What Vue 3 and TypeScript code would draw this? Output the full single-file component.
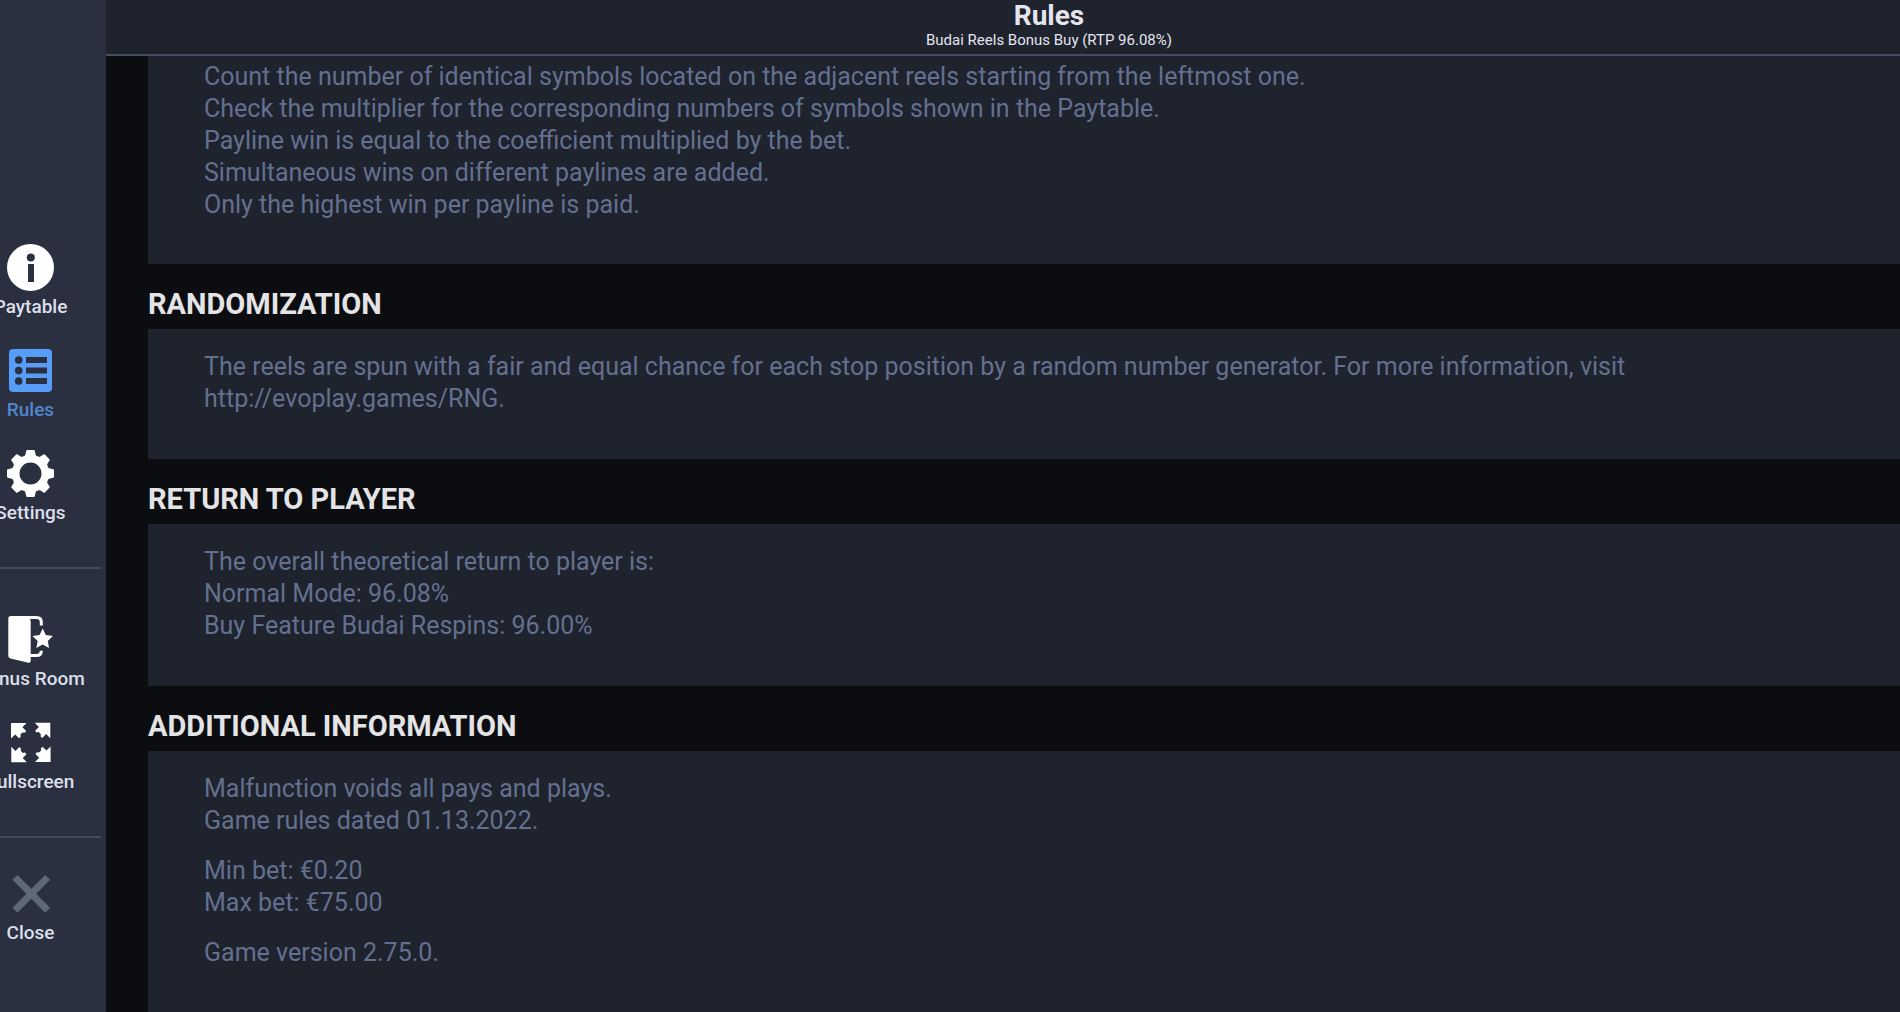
<script setup lang="ts">
interface RuleSection {
  title?: string
  paragraphs: string[][]
}

const sections: RuleSection[] = [
  {
    paragraphs: [
      [
        'Count the number of identical symbols located on the adjacent reels starting from the leftmost one.',
        'Check the multiplier for the corresponding numbers of symbols shown in the Paytable.',
        'Payline win is equal to the coefficient multiplied by the bet.',
        'Simultaneous wins on different paylines are added.',
        'Only the highest win per payline is paid.',
      ],
    ],
  },
  {
    title: 'RANDOMIZATION',
    paragraphs: [
      [
        'The reels are spun with a fair and equal chance for each stop position by a random number generator. For more information, visit http://evoplay.games/RNG.',
      ],
    ],
  },
  {
    title: 'RETURN TO PLAYER',
    paragraphs: [
      [
        'The overall theoretical return to player is:',
        'Normal Mode: 96.08%',
        'Buy Feature Budai Respins: 96.00%',
      ],
    ],
  },
  {
    title: 'ADDITIONAL INFORMATION',
    paragraphs: [
      ['Malfunction voids all pays and plays.', 'Game rules dated 01.13.2022.'],
      ['Min bet: €0.20', 'Max bet: €75.00'],
      ['Game version 2.75.0.'],
    ],
  },
]

const quarterTurns = [0, 90, 180, 270]
const gearTeeth = [0, 45, 90, 135, 180, 225, 270, 315]
</script>

<template>
  <div class="app">
    <div class="stage">
      <nav class="sidebar">
        <div class="group">
          <button type="button" class="item">
            <svg class="icon" viewBox="0 0 47 47" aria-hidden="true">
              <circle cx="23.5" cy="23.5" r="23.5" fill="currentColor" />
              <circle cx="23.8" cy="13.4" r="4" class="cut" />
              <rect x="21" y="20" width="6" height="18" class="cut" />
            </svg>
            <span class="label">Paytable</span>
          </button>
          <button type="button" class="item active" aria-current="page">
            <svg class="icon" viewBox="0 0 47 47" aria-hidden="true">
              <rect x="2" y="2" width="43" height="43" rx="4" fill="currentColor" />
              <g class="cut">
                <circle cx="11.7" cy="13" r="3.8" />
                <circle cx="11.7" cy="23.5" r="3.8" />
                <circle cx="11.7" cy="34" r="3.8" />
                <rect x="19" y="10" width="21" height="6" />
                <rect x="19" y="20.5" width="21" height="6" />
                <rect x="19" y="31" width="21" height="6" />
              </g>
            </svg>
            <span class="label">Rules</span>
          </button>
          <button type="button" class="item">
            <svg class="icon" viewBox="0 0 47 47" aria-hidden="true">
              <circle cx="23.5" cy="23.5" r="14.8" fill="none" stroke="currentColor" stroke-width="7.6" />
              <path
                v-for="angle in gearTeeth"
                :key="angle"
                d="M16.6 7.2 18.3 4.9 19.2 0.9Q19.4 0 20.3 0H26.7Q27.6 0 27.8 0.9L28.7 4.9 30.4 7.2Z"
                fill="currentColor"
                :transform="`rotate(${angle} 23.5 23.5)`"
              />
            </svg>
            <span class="label">Settings</span>
          </button>
        </div>
        <hr class="divider" />
        <div class="group lower">
          <button type="button" class="item">
            <svg class="icon" viewBox="0 0 47 47" aria-hidden="true">
              <path
                d="M4 0H19.5Q23.7 1.5 23.7 6V45Q23.7 47.2 21.4 46.7L3.5 42.6Q1.3 42 1.3 39.8V2.7Q1.3 0 4 0Z"
                fill="currentColor"
              />
              <path
                d="M18 1.5H29.5Q34.3 1.5 34.3 6.3V9.5M22 39.5H29.5Q34.3 39.5 34.3 34.7"
                fill="none"
                stroke="currentColor"
                stroke-width="3"
              />
              <path
                d="M35.7 12.6 38.8 18.9 45.9 19.9 40.8 24.9 42 31.9 35.7 28.6 29.4 31.9 30.6 24.9 25.5 19.9 32.6 18.9Z"
                fill="currentColor"
              />
            </svg>
            <span class="label">Bonus Room</span>
          </button>
          <button type="button" class="item">
            <svg class="icon" viewBox="0 0 47 47" aria-hidden="true">
              <path
                v-for="angle in quarterTurns"
                :key="angle"
                d="M4 4H19.6L15.4 8.2 19.2 12 17.6 13.8 15.6 13.4 13.4 15.6 13.8 17.6 12 19.2 8.2 15.4 4 19.6Z"
                fill="currentColor"
                :transform="`rotate(${angle} 23.8 23.5)`"
              />
            </svg>
            <span class="label">Fullscreen</span>
          </button>
        </div>
        <hr class="divider" />
        <div class="group closing">
          <button type="button" class="item">
            <svg class="icon muted" viewBox="0 0 47 47" aria-hidden="true">
              <path d="M8 7.4 40.6 40.2M40.6 7.4 8 40.2" fill="none" stroke="currentColor" stroke-width="7" />
            </svg>
            <span class="label">Close</span>
          </button>
        </div>
      </nav>

      <main class="main">
        <header class="header">
          <h1>Rules</h1>
          <p>Budai Reels Bonus Buy (RTP 96.08%)</p>
        </header>
        <section v-for="(section, i) in sections" :key="i" class="section">
          <h2 v-if="section.title">{{ section.title }}</h2>
          <div class="card">
            <p v-for="(lines, j) in section.paragraphs" :key="j">
              <span v-for="line in lines" :key="line" class="line">{{ line }}</span>
            </p>
          </div>
        </section>
      </main>
    </div>
    <div class="scrollbar"><div class="thumb"></div></div>
  </div>
</template>

<style>
body {
  margin: 0;
  background: #0b0d11;
}
</style>

<style scoped>
.app {
  display: flex;
  flex-direction: column;
  min-height: 100vh;
  overflow: hidden;
  font-family: Roboto, "Liberation Sans", sans-serif;
  background: #0b0d11;
}

/* The stage is wider than the window and bleeds off both sides. */
.stage {
  display: flex;
  flex: 1;
  margin: 0 -92px 0 -45px;
}

.sidebar {
  box-sizing: border-box;
  flex: none;
  width: 151px;
  padding-top: 244px;
  background: #2a3040;
}

.group {
  display: flex;
  flex-direction: column;
  align-items: center;
  gap: 28px;
}

.group.lower {
  padding-top: 47px;
}

.group.closing {
  padding-top: 32px;
}

.item {
  display: flex;
  flex-direction: column;
  align-items: center;
  gap: 4px;
  padding: 0;
  border: 0;
  background: none;
  color: #ffffff;
  font: inherit;
  cursor: pointer;
}

.icon {
  display: block;
  width: 47px;
  height: 47px;
}

.icon.muted {
  color: #5d6a76;
}

.cut {
  fill: #2a3040;
}

.label {
  color: #dcdfea;
  font-size: 19px;
  font-weight: 500;
  line-height: 24px;
  white-space: nowrap;
}

.active {
  color: #579df8;
}

.active .label {
  color: #4f86cc;
}

.divider {
  height: 2px;
  margin: 42px 5px 0;
  border: 0;
  background: #444c5c;
}

.main {
  display: flex;
  flex: 1;
  flex-direction: column;
  min-width: 0;
}

.header {
  box-sizing: border-box;
  height: 56px;
  border-bottom: 2px solid #454c62;
  background: #1e232d;
  color: #e4e5ee;
  text-align: center;
}

.header h1 {
  margin: 0;
  font-size: 28px;
  font-weight: 700;
  line-height: 32px;
}

.header p {
  margin: 0;
  font-size: 15px;
  line-height: 16px;
}

.section {
  display: flex;
  flex-direction: column;
  margin-left: 42px;
}

.section:last-child {
  flex: 1;
}

.section h2 {
  margin: 0;
  padding: 24px 0 9px;
  color: #e4e4e6;
  font-size: 29px;
  font-weight: 700;
  line-height: 32px;
}

.card {
  flex: 1;
  padding: 22px 98px 44px 56px;
  background: #1e232d;
  color: #64708f;
  font-size: 25px;
  line-height: 32px;
}

.header + .section .card {
  padding-top: 5px;
  padding-bottom: 43px;
}

.card p {
  margin: 0;
}

.card p + p {
  margin-top: 18px;
}

.line {
  display: block;
}

.scrollbar {
  height: 2px;
  background: #050507;
}

.thumb {
  width: 154px;
  height: 2px;
  background: #1b1c1f;
}
</style>
